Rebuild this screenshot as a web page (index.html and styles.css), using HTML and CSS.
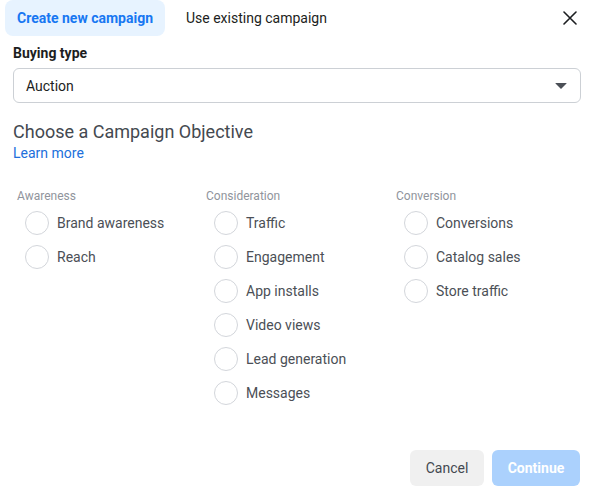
FILE: index.html
```html
<!DOCTYPE html>
<html lang="en">
<head>
  <meta charset="UTF-8" />
  <title>Create Campaign</title>
  <link rel="stylesheet" href="styles.css">
</head>
<body>
  <div class="dialog">
    <div class="header">
      <div class="tabs">
        <button class="tab active">Create new campaign</button>
        <button class="tab">Use existing campaign</button>
      </div>
      <button class="close" aria-label="Close">
        <svg width="14" height="14" viewBox="0 0 14 14">
          <path d="M1 1 L13 13 M13 1 L1 13" stroke="#1c1e21" stroke-width="1.6" stroke-linecap="round" />
        </svg>
      </button>
    </div>

    <div class="content">
      <div class="field-label">Buying type</div>
      <div class="select">
        <span>Auction</span>
        <span class="caret"></span>
      </div>

      <h2 class="title">Choose a Campaign Objective</h2>
      <a class="learn" href="#">Learn more</a>

      <div class="objectives">
        <div class="group">
          <div class="group-label">Awareness</div>
          <label class="option"><span class="radio"></span>Brand awareness</label>
          <label class="option"><span class="radio"></span>Reach</label>
        </div>
        <div class="group">
          <div class="group-label">Consideration</div>
          <label class="option"><span class="radio"></span>Traffic</label>
          <label class="option"><span class="radio"></span>Engagement</label>
          <label class="option"><span class="radio"></span>App installs</label>
          <label class="option"><span class="radio"></span>Video views</label>
          <label class="option"><span class="radio"></span>Lead generation</label>
          <label class="option"><span class="radio"></span>Messages</label>
        </div>
        <div class="group">
          <div class="group-label">Conversion</div>
          <label class="option"><span class="radio"></span>Conversions</label>
          <label class="option"><span class="radio"></span>Catalog sales</label>
          <label class="option"><span class="radio"></span>Store traffic</label>
        </div>
      </div>

      <div class="footer">
        <button class="btn cancel">Cancel</button>
        <button class="btn continue" disabled>Continue</button>
      </div>
    </div>
  </div>
</body>
</html>
```

FILE: styles.css
```css
* {
  margin: 0;
  padding: 0;
  box-sizing: border-box;
  font-family: Roboto, "Liberation Sans", sans-serif;
}

body {
  background: #fff;
  width: 589px;
  height: 492px;
  overflow: hidden;
}

button {
  border: none;
  background: none;
  cursor: pointer;
}

.header {
  display: flex;
  justify-content: space-between;
  align-items: center;
  height: 35px;
  padding-left: 5px;
  padding-right: 12px;
}

.tabs {
  display: flex;
  gap: 9px;
  height: 100%;
}

.tab {
  height: 36px;
  padding: 0 12px;
  border-radius: 0 0 8px 8px;
  font-size: 14px;
  color: #1c1e21;
}

.tab.active {
  background: #e7f3ff;
  color: #1877f2;
  font-weight: 700;
  border-radius: 8px;
}

.close {
  width: 14px;
  height: 14px;
  display: flex;
}

.content {
  padding: 8px 8px 0 13px;
}

.field-label {
  font-size: 14px;
  line-height: 20px;
  font-weight: 700;
  color: #1c1e21;
}

.select {
  margin-top: 5px;
  height: 35px;
  border: 1px solid #ccd0d5;
  border-radius: 6px;
  display: flex;
  align-items: center;
  justify-content: space-between;
  padding: 0 13px 0 12px;
  font-size: 14px;
  color: #1c1e21;
}

.caret {
  width: 0;
  height: 0;
  border-left: 6px solid transparent;
  border-right: 6px solid transparent;
  border-top: 6px solid #4b4f56;
  border-radius: 1px;
}

.title {
  margin-top: 18px;
  font-size: 18px;
  line-height: 22px;
  font-weight: 400;
  color: #444950;
}

.learn {
  display: block;
  font-size: 14px;
  line-height: 20px;
  color: #216fdb;
  text-decoration: none;
}

.objectives {
  margin-top: 25px;
  padding-left: 4px;
  display: grid;
  grid-template-columns: 189px 190px 1fr;
}

.group-label {
  font-size: 12px;
  line-height: 16px;
  color: #90949c;
  margin-bottom: 2px;
}

.option {
  display: flex;
  align-items: center;
  gap: 8px;
  height: 34px;
  padding-left: 8px;
  font-size: 14px;
  color: #4b4f56;
}

.radio {
  width: 24px;
  height: 24px;
  border: 1px solid #d3d6db;
  border-radius: 50%;
}

.footer {
  margin-top: 40px;
  padding-right: 1px;
  display: flex;
  justify-content: flex-end;
  gap: 8px;
}

.btn {
  height: 36px;
  border-radius: 6px;
  font-size: 14px;
}

.cancel {
  width: 74px;
  background: #f0f0f0;
  color: #444950;
}

.continue {
  width: 88px;
  background: #abd1fd;
  color: #fff;
  font-weight: 700;
  cursor: default;
}
```
